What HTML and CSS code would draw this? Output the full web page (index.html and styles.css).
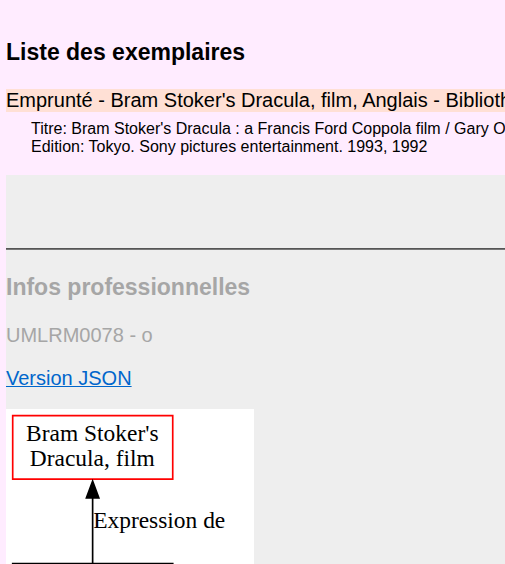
FILE: index.html
```html
<!DOCTYPE html>
<html lang="fr">
<head>
<meta charset="utf-8">
<title>Liste des exemplaires</title>
<link rel="stylesheet" href="styles.css">
</head>
<body>
<main>
  <section class="items">
    <h2>Liste des exemplaires</h2>
    <p class="item-status">Emprunté - Bram Stoker's Dracula, film, Anglais - Bibliothèque</p>
    <div class="item-details">
      <div>Titre: Bram Stoker's Dracula : a Francis Ford Coppola film / Gary Oldman</div>
      <div>Edition: Tokyo. Sony pictures entertainment. 1993, 1992</div>
    </div>
  </section>
  <section class="pro">
    <hr>
    <h2>Infos professionnelles</h2>
    <p>UMLRM0078 - o</p>
    <p class="json-link"><a href="#json">Version JSON</a></p>
    <svg class="graph" width="248" height="248" viewBox="0 0 148 148" role="img" aria-label="Graphe">
      <rect width="148" height="148" fill="#fff"/>
      <path d="M4 4H99.500V41.800H4Z" fill="none" stroke="#f00"/>
      <text x="51.500" y="19" text-anchor="middle">Bram Stoker's</text>
      <text x="51.500" y="34" text-anchor="middle">Dracula, film</text>
      <path d="M51.700 53V92" stroke="#000"/>
      <path d="M48 53L51.700 43L55.400 53Z" stroke="#000"/>
      <text x="52" y="71">Expression de</text>
      <path d="M4 92.200H99.500V130H4Z" fill="none" stroke="#000"/>
    </svg>
  </section>
</main>
</body>
</html>
```
FILE: styles.css
```css
body {
  margin: 0;
  padding: 39px 0 0 6px;
  background: #ffecff;
  color: #000;
  font: 20px/23px "Liberation Sans", Arial, sans-serif;
  overflow: hidden;
}

h2 {
  margin: 0;
  font-size: 23px;
  line-height: 26px;
}

p {
  margin: 20px 0;
}

.item-status {
  margin: 24px 0 8px;
  background: #ffe0d5;
  white-space: nowrap;
}

.item-details {
  padding-left: 25px;
  font-size: 16px;
  line-height: 18px;
  white-space: nowrap;
}

.pro {
  margin-top: 19px;
  padding-top: 73px;
  background: #eee;
  color: #a6a6a6;
}

.pro hr {
  height: 0;
  margin: 0 0 24px;
  border: 0;
  border-top: 1px solid #555;
  border-bottom: 1px solid #777;
}

.pro h2 {
  margin-bottom: 24px;
}

.pro a {
  color: #06c;
  text-decoration-thickness: 1px;
}

.json-link {
  margin-bottom: 19px;
}

.graph {
  display: block;
  font: 14px "Liberation Serif", "Times New Roman", serif;
}
```
